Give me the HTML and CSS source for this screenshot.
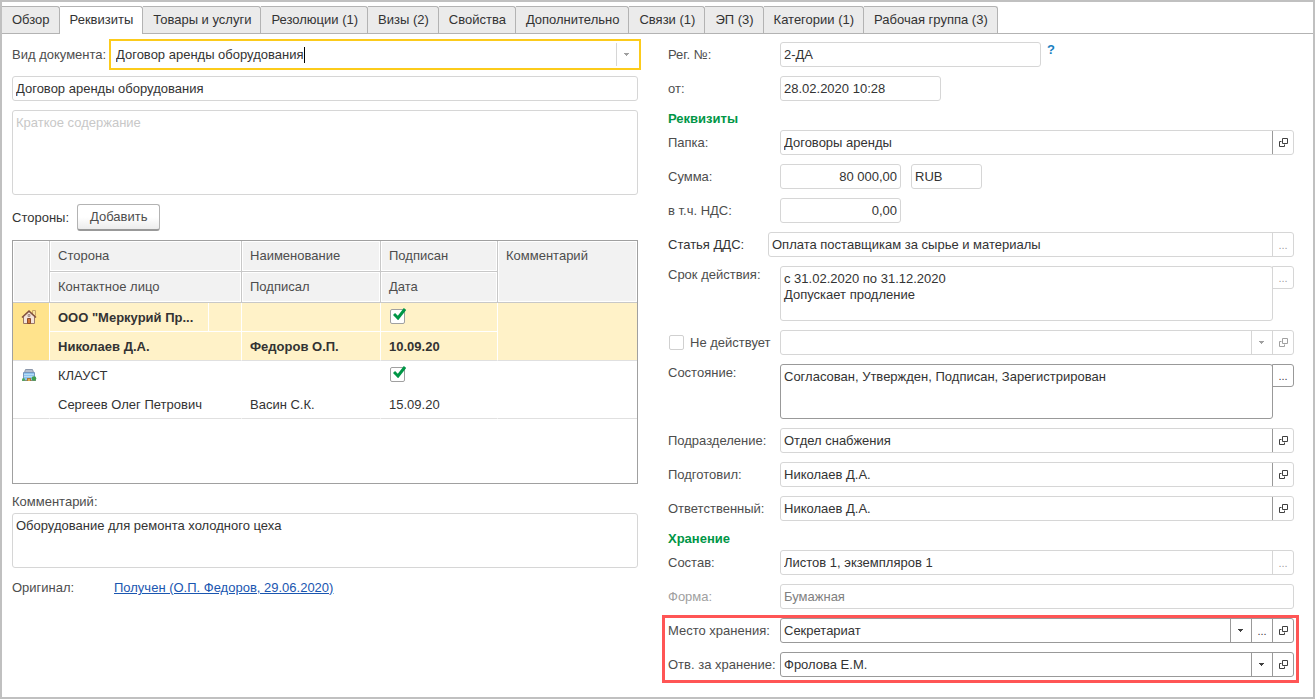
FILE: index.html
```html
<!DOCTYPE html>
<html lang="ru">
<head>
    <meta charset="UTF-8">
    <title>Договор аренды оборудования</title>
    <link rel="stylesheet" href="styles.css">
</head>

<body>
    <!-- общие значки -->
    <svg class="sprite">
        <symbol id="open" viewBox="-1 0 10 9">
            <path d="M3.5 .5h5v5h-5zM2.5 3.5h-2v5h5v-2" fill="none" stroke="currentColor"/>
        </symbol>
        <symbol id="arrow" viewBox="0 0 6 3">
            <path d="M0 0h5v1H4v1H3v1H2V2H1V1H0z" fill="currentColor"/>
        </symbol>
        <symbol id="tick" viewBox="0 0 13 12">
            <path d="M1 6L5 10L12 1" fill="none" stroke="#009646" stroke-width="3"/>
        </symbol>
    </svg>

    <div class="window">
        <nav class="tabs">
            <button class="tab">Обзор</button>
            <button class="tab active">Реквизиты</button>
            <button class="tab">Товары и услуги</button>
            <button class="tab">Резолюции (1)</button>
            <button class="tab">Визы (2)</button>
            <button class="tab">Свойства</button>
            <button class="tab">Дополнительно</button>
            <button class="tab">Связи (1)</button>
            <button class="tab">ЭП (3)</button>
            <button class="tab">Категории (1)</button>
            <button class="tab">Рабочая группа (3)</button>
        </nav>

        <main class="form">
            <!-- левая колонка -->
            <section class="column">
                <div class="row">
                    <label class="label label-short" for="kind">Вид документа:</label>
                    <div class="field focused">
                        <input id="kind" type="text" value="Договор аренды оборудования">
                        <span class="caret"></span>
                        <button class="cell muted" aria-label="Выбрать"><svg class="i-arrow"><use href="#arrow"/></svg></button>
                    </div>
                </div>
                <div class="field">
                    <input type="text" aria-label="Наименование" value="Договор аренды оборудования">
                </div>
                <textarea class="area summary" aria-label="Краткое содержание" placeholder="Краткое содержание"></textarea>

                <div class="row parties-bar">
                    <span class="dark">Стороны:</span>
                    <button class="add">Добавить</button>
                </div>

                <div class="grid">
                    <table class="parties">
                        <colgroup>
                            <col class="c-icon">
                            <col class="c-party">
                            <col class="c-extra">
                            <col class="c-name">
                            <col class="c-signed">
                            <col>
                        </colgroup>
                        <thead>
                            <tr>
                                <th rowspan="2"></th>
                                <th colspan="2">Сторона</th>
                                <th>Наименование</th>
                                <th>Подписан</th>
                                <th rowspan="2" class="top">Комментарий</th>
                            </tr>
                            <tr>
                                <th colspan="2">Контактное лицо</th>
                                <th>Подписал</th>
                                <th>Дата</th>
                            </tr>
                        </thead>
                        <tbody class="selected">
                            <tr>
                                <td rowspan="2" class="icon">
                                    <svg width="16" height="16" viewBox="0 0 16 16">
                                        <path d="M11.500 1.500h3v5h-3z" fill="#f7e2a0" stroke="#c9a468"/>
                                        <path d="M2.500 7.500L8 2.500l5.500 5v7h-11z" fill="#f4e4da" stroke="#9a7868"/>
                                        <path d="M1 8.500L8 2l7 6.500" fill="none" stroke="#80503f" stroke-width="1.500"/>
                                        <path d="M6.500 14.500v-5h3v5z" fill="#cf7434" stroke="#8b4a2b"/>
                                        <path d="M7 5.500h2v2H7z" fill="#c8b8b4" stroke="#8b7068" stroke-width=".6"/>
                                    </svg>
                                </td>
                                <td>ООО "Меркурий Пр...</td>
                                <td></td>
                                <td></td>
                                <td class="signed">
                                    <label class="check">
                                        <input type="checkbox" aria-label="Подписан" checked>
                                        <svg><use href="#tick"/></svg>
                                    </label>
                                </td>
                                <td rowspan="2"></td>
                            </tr>
                            <tr>
                                <td colspan="2">Николаев Д.А.</td>
                                <td>Федоров О.П.</td>
                                <td>10.09.20</td>
                            </tr>
                        </tbody>
                        <tbody>
                            <tr>
                                <td rowspan="2" class="icon">
                                    <svg width="16" height="16" viewBox="0 0 16 16">
                                        <path d="M4.500 2.500h7l1 3h-9z" fill="#b4bfd0" stroke="#8c98ac"/>
                                        <path d="M2.500 5.500h11v8h-11z" fill="#8cc4ee" stroke="#7896bc"/>
                                        <path d="M3 7.500h10M3 9.500h10" stroke="#b8dcf6"/>
                                        <path d="M1 13.500h14" stroke="#84907c"/>
                                        <path d="M6 11h4v3H6z" fill="#a8783c"/>
                                        <path d="M7 12h2v2H7z" fill="#e0b050"/>
                                        <circle cx="13" cy="11.500" r="2.300" fill="#3fa050"/>
                                        <circle cx="2.500" cy="12.500" r="1.500" fill="#4ca860"/>
                                    </svg>
                                </td>
                                <td>КЛАУСТ</td>
                                <td></td>
                                <td></td>
                                <td class="signed">
                                    <label class="check">
                                        <input type="checkbox" aria-label="Подписан" checked>
                                        <svg><use href="#tick"/></svg>
                                    </label>
                                </td>
                                <td rowspan="2"></td>
                            </tr>
                            <tr>
                                <td colspan="2">Сергеев Олег Петрович</td>
                                <td>Васин С.К.</td>
                                <td>15.09.20</td>
                            </tr>
                        </tbody>
                    </table>
                </div>

                <div class="comment">
                    <label for="comment">Комментарий:</label>
                    <textarea id="comment" class="area">Оборудование для ремонта холодного цеха</textarea>
                </div>
                <div class="row original">
                    <span class="label label-short">Оригинал:</span>
                    <a href="#">Получен (О.П. Федоров, 29.06.2020)</a>
                </div>
            </section>

            <!-- правая колонка -->
            <section class="column">
                <div class="row">
                    <label class="label" for="number">Рег. №:</label>
                    <div class="field w-number"><input id="number" type="text" value="2-ДА"></div>
                    <a class="help" href="#">?</a>
                </div>
                <div class="row">
                    <label class="label" for="date">от:</label>
                    <div class="field w-date"><input id="date" type="text" value="28.02.2020 10:28"></div>
                </div>

                <h2>Реквизиты</h2>
                <div class="row">
                    <label class="label" for="folder">Папка:</label>
                    <div class="field">
                        <input id="folder" type="text" value="Договоры аренды">
                        <button class="cell strong" aria-label="Открыть"><svg class="i-open"><use href="#open"/></svg></button>
                    </div>
                </div>
                <div class="row">
                    <label class="label" for="sum">Сумма:</label>
                    <div class="field w-sum"><input id="sum" class="number" type="text" value="80 000,00"></div>
                    <div class="field w-currency"><input type="text" aria-label="Валюта" value="RUB"></div>
                </div>
                <div class="row">
                    <label class="label" for="vat">в т.ч. НДС:</label>
                    <div class="field w-sum"><input id="vat" class="number" type="text" value="0,00"></div>
                </div>
                <div class="row">
                    <label class="label label-short dark" for="item">Статья ДДС:</label>
                    <div class="field">
                        <input id="item" type="text" value="Оплата поставщикам за сырье и материалы">
                        <button class="cell muted" aria-label="Выбрать">...</button>
                    </div>
                </div>
                <div class="row tall">
                    <label class="label" for="term">Срок действия:</label>
                    <textarea id="term" class="area">с 31.02.2020 по 31.12.2020
Допускает продление</textarea>
                    <button class="side muted" aria-label="Выбрать">...</button>
                </div>
                <div class="row">
                    <label class="label toggle"><input type="checkbox">Не действует</label>
                    <div class="field muted">
                        <select aria-label="Причина" disabled><option></option></select>
                        <button class="cell muted" aria-label="Выбрать"><svg class="i-arrow"><use href="#arrow"/></svg></button>
                        <button class="cell muted" aria-label="Открыть"><svg class="i-open"><use href="#open"/></svg></button>
                    </div>
                </div>
                <div class="row tall">
                    <label class="label" for="state">Состояние:</label>
                    <textarea id="state" class="area strong">Согласован, Утвержден, Подписан, Зарегистрирован</textarea>
                    <button class="side strong" aria-label="Выбрать">...</button>
                </div>
                <div class="row">
                    <label class="label" for="department">Подразделение:</label>
                    <div class="field">
                        <input id="department" type="text" value="Отдел снабжения">
                        <button class="cell strong" aria-label="Открыть"><svg class="i-open"><use href="#open"/></svg></button>
                    </div>
                </div>
                <div class="row">
                    <label class="label" for="author">Подготовил:</label>
                    <div class="field">
                        <input id="author" type="text" value="Николаев Д.А.">
                        <button class="cell strong" aria-label="Открыть"><svg class="i-open"><use href="#open"/></svg></button>
                    </div>
                </div>
                <div class="row">
                    <label class="label" for="owner">Ответственный:</label>
                    <div class="field">
                        <input id="owner" type="text" value="Николаев Д.А.">
                        <button class="cell strong" aria-label="Открыть"><svg class="i-open"><use href="#open"/></svg></button>
                    </div>
                </div>

                <h2>Хранение</h2>
                <div class="row">
                    <label class="label" for="content">Состав:</label>
                    <div class="field">
                        <input id="content" type="text" value="Листов 1, экземпляров 1">
                        <button class="cell muted" aria-label="Выбрать">...</button>
                    </div>
                </div>
                <div class="row">
                    <label class="label muted" for="medium">Форма:</label>
                    <div class="field"><input id="medium" type="text" value="Бумажная" disabled></div>
                </div>
                <div class="highlight">
                    <div class="row">
                        <label class="label" for="place">Место хранения:</label>
                        <div class="field strong">
                            <select id="place"><option>Секретариат</option></select>
                            <button class="cell strong" aria-label="Список"><svg class="i-arrow"><use href="#arrow"/></svg></button>
                            <button class="cell strong" aria-label="Выбрать">...</button>
                            <button class="cell strong" aria-label="Открыть"><svg class="i-open"><use href="#open"/></svg></button>
                        </div>
                    </div>
                    <div class="row">
                        <label class="label" for="keeper">Отв. за хранение:</label>
                        <div class="field strong">
                            <select id="keeper"><option>Фролова Е.М.</option></select>
                            <button class="cell strong" aria-label="Список"><svg class="i-arrow"><use href="#arrow"/></svg></button>
                            <button class="cell strong" aria-label="Открыть"><svg class="i-open"><use href="#open"/></svg></button>
                        </div>
                    </div>
                </div>
            </section>
        </main>
    </div>
</body>
</html>
```

FILE: styles.css
```css
* {
    box-sizing: border-box;
}
body {
    margin: 0;
    color: #4d4d4d;
    background: #fff;
}
body, input, textarea, select, button {
    font-family: "Liberation Sans", Arial, sans-serif;
    font-size: 13px;
    line-height: 16px;
}
.sprite {
    display: none;
}
.window {
    min-height: 100vh;
    border: 2px solid #c0c0c0;
}

/* вкладки */
.tabs {
    display: flex;
    margin-top: 4px;
    border-bottom: 1px solid #b3b3b3;
}
.tab {
    height: 27px;
    padding: 0 9px 0 10px;
    color: #333;
    background: #ebebeb;
    border: 1px solid #b3b3b3;
    border-width: 1px 1px 0 0;
    border-radius: 0 3px 0 0;
    white-space: nowrap;
}
.tab.active {
    height: 28px;
    margin-bottom: -1px;
    padding-bottom: 1px;
    background: #fff;
}

/* форма */
.form {
    display: grid;
    grid-template-columns: 1fr 1fr;
    gap: 30px;
    padding: 8px 19px 8px 10px;
}
.column {
    display: flex;
    flex-direction: column;
    gap: 9px;
    min-width: 0;
}
.row {
    display: flex;
    align-items: center;
}
.row.tall {
    align-items: flex-start;
}
.label {
    flex: none;
    width: 112px;
    white-space: nowrap;
}
.tall .label {
    padding-top: 1px;
}
.label-short {
    width: 100px;
}
.dark {
    color: #333;
}
.label.muted {
    color: #a0a0a0;
}
.toggle {
    display: flex;
    align-items: center;
    gap: 6px;
    padding-left: 1px;
}
h2 {
    margin: 0 0 -6px;
    color: #009646;
    font-size: 13px;
    line-height: 17px;
}

/* поля ввода */
.field {
    display: flex;
    flex: 1;
    min-width: 0;
    height: 25px;
    border: 1px solid #d6d6d6;
    border-radius: 3px;
}
.column > .field {
    flex: none;
}
.field input, .field select {
    flex: 1;
    min-width: 0;
    padding: 0 3px;
    color: #333;
    background: none;
    border: none;
    outline: none;
    appearance: none;
    opacity: 1;
}
.field input:disabled {
    color: #808080;
}
.field input.number {
    text-align: right;
}
.field.strong {
    border-color: #999;
}
.field.focused {
    position: relative;
    border-color: transparent;
    border-radius: 0;
    outline: 2px solid #fccb1b;
    outline-offset: 1px;
}
.caret {
    position: absolute;
    top: 4px;
    left: 191px;
    width: 1px;
    height: 16px;
    background: #000;
}
.w-number {
    flex: 0 0 261px;
}
.w-date {
    flex: 0 0 161px;
}
.w-sum {
    flex: 0 0 121px;
}
.w-currency {
    flex: 0 0 71px;
    margin-left: 10px;
}
.area {
    flex: 1;
    height: 55px;
    padding: 4px 3px 3px;
    color: #333;
    background: #fff;
    border: 1px solid #d6d6d6;
    border-radius: 3px;
    outline: none;
    resize: none;
}
.area.strong {
    border-color: #999;
}
.area::placeholder {
    color: #c8c8c8;
}
.area.summary {
    flex: none;
    height: 85px;
}
.cell, .side {
    display: flex;
    flex: none;
    align-items: center;
    justify-content: center;
    width: 21px;
    padding: 0;
    color: #404040;
    background: none;
    border: none;
    border-left: 1px solid #999;
    font-size: 11px;
}
.side {
    width: 22px;
    height: 23px;
    margin-left: -1px;
    border: 1px solid #999;
    border-radius: 0 3px 3px 0;
}
.cell.muted, .side.muted {
    color: #a0a0a0;
    border-color: #d6d6d6;
}
.i-open {
    width: 10px;
    height: 9px;
}
.i-arrow {
    width: 6px;
    height: 3px;
}
.help {
    align-self: flex-start;
    margin-left: 6px;
    color: #1a7fc1;
    font-weight: bold;
    text-decoration: none;
}
a {
    color: #1a56b0;
}
.highlight {
    display: flex;
    flex-direction: column;
    gap: 9px;
    margin: -3px -5px 0 -6px;
    padding: 0 2px 3px 3px;
    border: 3px solid #ff5555;
}

/* стороны договора */
.parties-bar {
    gap: 8px;
}
.add {
    height: 27px;
    padding: 0 12px;
    color: #4d4d4d;
    background: linear-gradient(#fff 50%, #ececec);
    border: 1px solid #b3b3b3;
    border-bottom: 2px solid #999;
    border-radius: 3px;
}
.grid {
    min-height: 244px;
    border: 1px solid #a0a0a0;
}
.parties {
    width: 100%;
    table-layout: fixed;
    border-spacing: 0;
}
.c-icon {
    width: 37px;
}
.c-party {
    width: 159px;
}
.c-extra {
    width: 33px;
}
.c-name {
    width: 139px;
}
.c-signed {
    width: 117px;
}
.parties th {
    height: 31px;
    padding: 0 8px;
    background: #f2f2f2;
    border: 1px solid #c8c8c8;
    border-width: 0 1px 1px 0;
    box-shadow: inset 0 0 0 1px #fff;
    font-weight: normal;
    text-align: left;
}
.parties th.top {
    padding-top: 7px;
    border-right: none;
    vertical-align: top;
}
.parties td {
    height: 29px;
    padding: 2px 8px 0;
    color: #333;
    border: 1px solid #fff;
    border-width: 0 1px 1px 0;
    white-space: nowrap;
}
.parties td[rowspan], .parties tr:last-child td {
    border-bottom-color: #e0e0e0;
}
.parties td[rowspan]:last-child {
    border-right: none;
}
.selected td {
    background: #fff2c8;
    font-weight: bold;
}
.parties .icon, .parties .signed {
    padding-top: 6px;
    vertical-align: top;
}
.selected .icon {
    background: #ffe38c;
}
.icon svg {
    display: block;
}
.check {
    display: block;
    position: relative;
    width: 15px;
    height: 15px;
    margin-left: 1px;
}
.check input, .toggle input {
    display: block;
    width: 15px;
    height: 15px;
    margin: 0;
    background: #fff;
    border: 1px solid #a0a0a0;
    border-radius: 2px;
    appearance: none;
}
.toggle input {
    border-color: #d0d0d0;
}
.check svg {
    position: absolute;
    top: -1px;
    left: 3px;
    width: 13px;
    height: 12px;
}

.comment {
    display: flex;
    flex-direction: column;
    gap: 3px;
    padding-top: 1px;
}
.comment .area {
    flex: none;
}
.original {
    padding-top: 3px;
}
.original .label {
    width: 102px;
}
```
